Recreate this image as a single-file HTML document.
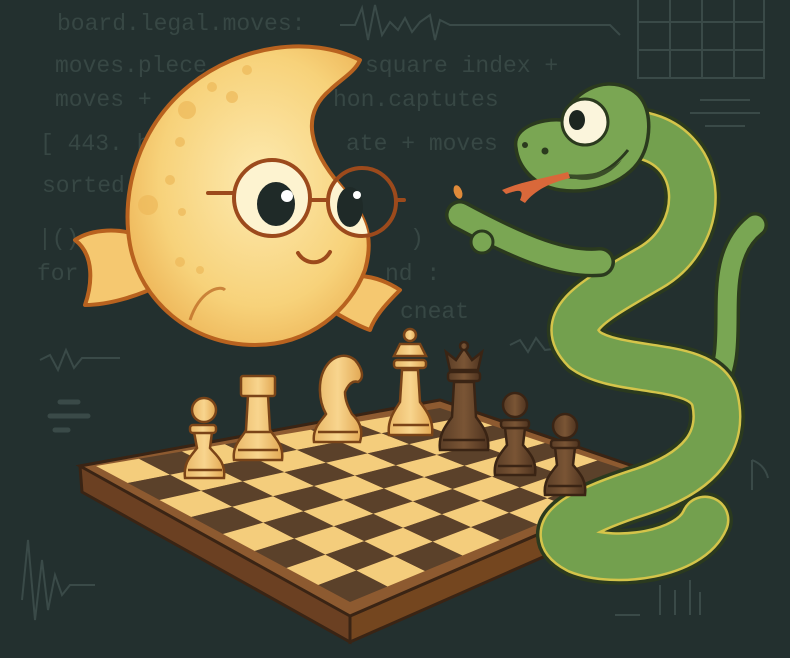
<!DOCTYPE html>
<html><head><meta charset="utf-8">
<style>
html,body{margin:0;padding:0;background:#23302f;}
svg{display:block}
.code{font-family:"Liberation Mono",monospace;font-size:23px;fill:#374744;}
</style></head>
<body>
<svg id="s" width="790" height="658" viewBox="0 0 790 658" xmlns="http://www.w3.org/2000/svg">
<defs>
<radialGradient id="fishg" cx="0.55" cy="0.45" r="0.6">
<stop offset="0" stop-color="#fdeab0"/><stop offset="0.7" stop-color="#f7d27a"/><stop offset="1" stop-color="#eeb75a"/>
</radialGradient>
<linearGradient id="lp" x1="0" x2="1"><stop offset="0" stop-color="#e9b766"/><stop offset="0.5" stop-color="#f8d58e"/><stop offset="1" stop-color="#e2a853"/></linearGradient>
<linearGradient id="dp" x1="0" x2="1"><stop offset="0" stop-color="#5a3d26"/><stop offset="0.5" stop-color="#7a5535"/><stop offset="1" stop-color="#4e331f"/></linearGradient>
<clipPath id="fc"><path d="M360 60 C310 35 240 45 190 85 C140 125 120 190 130 245 C140 300 190 345 255 345 C310 345 350 310 365 270 C375 235 365 215 340 185 C310 150 300 115 330 90 C340 80 355 72 360 60 Z"/></clipPath>
</defs>
<rect width="790" height="658" fill="#23302f"/>
<g class="code">
<text x="57" y="30">board.legal.moves:</text>
<text x="55" y="72">moves.plece</text>
<text x="365" y="72">square index +</text>
<text x="55" y="106">moves +</text>
<text x="333" y="106">hon.captutes</text>
<text x="40" y="150">[ 443. b</text>
<text x="346" y="150">ate + moves</text>
<text x="42" y="192">sorted</text>
<text x="38" y="245">|()</text>
<text x="410" y="245">)</text>
<text x="37" y="280">for</text>
<text x="385" y="280">nd :</text>
<text x="400" y="318">cneat</text>
</g>
<g stroke="#3a4a48" stroke-width="2" fill="none">
<path d="M340 25 L355 25 L362 8 L368 40 L375 5 L382 35 L390 22 L398 30 L405 18 L412 32 L420 22 L430 15 L435 40 L440 20 L450 25 L610 25 L620 35"/>
<path d="M638 0 V78 H764 V0 M638 22 H764 M638 50 H764 M670 0 V78 M702 0 V78 M734 0 V78"/>
<path d="M22 600 L28 540 L35 620 L42 560 L48 610 L55 575 L62 595 L70 585 L95 585"/>
<path d="M40 360 L50 355 L58 370 L66 350 L74 368 L82 358 L120 358"/>
<path d="M510 345 L520 340 L528 352 L536 338 L545 350 L560 348"/>
<path d="M700 100 H750 M690 113 H760 M705 126 H745"/>
<path d="M660 585 V615 M675 590 V615 M690 580 V615 M700 592 V615 M615 615 H640"/>
<path d="M752 460 V490 M752 460 Q765 465 768 478"/>
</g>
<g stroke="#3a4a48" stroke-width="5" stroke-linecap="round">
<path d="M60 402 H78 M50 416 H88 M55 430 H68"/>
</g>
<g id="board">
<polygon points="80,466 440,400 668,478 350,616 350,642 82,492" fill="#6b4022" stroke="#3a2414" stroke-width="3"/>
<polygon points="350,616 668,478 668,502 350,642" fill="#74461f" stroke="#3a2414" stroke-width="3"/>
<polygon points="80,466 440,400 668,478 350,616" fill="#8d5a30" stroke="#3a2414" stroke-width="3"/>
<g id="sq"></g>
</g>
<!-- fish -->
<g stroke="#b8621f" stroke-width="4" stroke-linejoin="round">
<path d="M150 240 C120 225 90 230 75 240 C95 255 92 285 85 305 C110 305 140 295 160 285 Z" fill="#f5c870"/>
<path d="M335 280 C360 270 385 280 400 290 C390 300 375 315 370 330 C355 325 340 315 330 310 Z" fill="#f5c870"/>
<path d="M360 60 C310 35 240 45 190 85 C140 125 120 190 130 245 C140 300 190 345 255 345 C310 345 350 310 365 270 C375 235 365 215 340 185 C310 150 300 115 330 90 C340 80 355 72 360 60 Z" fill="url(#fishg)"/>
<path d="M190 320 C200 290 220 285 225 290" fill="none" stroke-width="3" opacity="0.7"/>
</g>
<g fill="#eeb95a" opacity="0.7">
<circle cx="247" cy="70" r="5"/><circle cx="212" cy="87" r="5"/><circle cx="232" cy="97" r="6"/><circle cx="187" cy="110" r="9"/><circle cx="180" cy="142" r="5"/><circle cx="170" cy="180" r="5"/><circle cx="148" cy="205" r="10"/><circle cx="182" cy="212" r="4"/><circle cx="180" cy="262" r="5"/><circle cx="200" cy="270" r="4"/>
</g>
<circle cx="272" cy="198" r="38" fill="#fdf3d0"/>
<circle cx="362" cy="202" r="34" fill="#fdf3d0" clip-path="url(#fc)"/>
<g stroke="#9c4a1c" stroke-width="4" fill="none" stroke-linecap="round">
<circle cx="272" cy="198" r="38"/>
<circle cx="362" cy="202" r="34"/>
<path d="M208 193 H234 M310 200 H328 M396 200 H404"/>
</g>
<ellipse cx="276" cy="204" rx="19" ry="22" fill="#1f2a28"/>
<circle cx="287" cy="196" r="6" fill="#fff"/>
<ellipse cx="350" cy="207" rx="13" ry="20" fill="#1f2a28"/>
<circle cx="357" cy="195" r="4" fill="#fff"/>
<path d="M298 253 C305 265 322 266 330 252" fill="none" stroke="#9c4a1c" stroke-width="4" stroke-linecap="round"/>
<ellipse cx="458" cy="192" rx="4" ry="7" fill="#e08a3a" transform="rotate(-20 458 192)"/>
<!-- snake -->
<g fill="none" stroke-linecap="round" stroke-linejoin="round">
<path id="body" d="M640 135 C708 148 708 235 650 268 C595 300 555 320 585 350 C620 375 705 360 715 400 C724 440 702 472 640 492 C585 510 540 530 578 550 C615 565 690 555 705 520"/>
<path d="M712 390 C745 350 705 265 755 225" stroke="#2b3a1e" stroke-width="26"/>
<path d="M712 390 C745 350 705 265 755 225" stroke="#79a653" stroke-width="19"/>
<use href="#body" stroke="#2b3a1e" stroke-width="56"/>
<use href="#body" stroke="#d4c44a" stroke-width="49"/>
<use href="#body" stroke="#73a04e" stroke-width="44"/>
<path d="M600 262 C565 265 525 250 460 215" stroke="#2b3a1e" stroke-width="30"/>
<path d="M600 262 C565 265 525 250 460 215" stroke="#7aa653" stroke-width="23"/>
</g>
<circle cx="482" cy="242" r="11" fill="#7aa653" stroke="#2b3a1e" stroke-width="3"/>
<path d="M516 148 C512 128 540 118 562 120 C572 92 602 76 628 88 C655 100 650 138 644 152 C632 182 592 195 560 190 C533 186 518 166 516 148 Z" fill="#7aa653" stroke="#2b3a1e" stroke-width="3.5"/>
<path d="M562 176 C592 182 612 170 628 150" fill="none" stroke="#2b3a1e" stroke-width="3"/>
<path d="M565 174 C582 186 607 179 622 160 C607 173 587 176 565 174Z" fill="#3a4d28"/>
<path d="M568 172 C545 178 520 182 502 190 L506 194 C518 190 525 188 520 200 L525 203 C535 190 550 183 570 178 Z" fill="#d9683a"/>
<circle cx="585" cy="122" r="23" fill="#fbf5dc" stroke="#2b3a1e" stroke-width="3"/>
<ellipse cx="577" cy="120" rx="8" ry="10" fill="#1d2620"/>
<circle cx="525" cy="145" r="3" fill="#2b3a1e"/><circle cx="545" cy="151" r="3.5" fill="#2b3a1e"/>
<!-- pieces -->
<g stroke="#7a4418" stroke-width="2.5" fill="url(#lp)">
<path d="M185 478 C183 462 192 455 197 448 L194 432 L212 432 L210 448 C216 455 226 462 224 478 Z"/>
<rect x="190" y="425" width="26" height="8" rx="3"/>
<circle cx="204" cy="410" r="12"/>
<path d="M188 470 H222" fill="none"/>
<path d="M234 460 C232 445 242 438 246 430 L248 395 L268 395 L270 430 C275 438 284 445 282 460 Z"/>
<rect x="241" y="376" width="34" height="20" rx="2"/>
<path d="M238 450 H278 M245 432 H271" fill="none"/>
<path d="M314 442 C312 428 322 420 326 414 C318 400 318 380 325 368 C332 356 345 352 355 360 C362 368 365 378 358 382 C352 380 348 385 345 392 C345 402 350 410 352 414 C358 420 364 428 360 442 Z"/>
<path d="M318 432 H358" fill="none"/>
<path d="M389 435 C387 420 395 410 400 402 L402 370 L418 370 L420 402 C426 410 434 420 432 435 Z"/>
<path d="M394 356 H426 L420 344 H400 Z"/>
<rect x="394" y="360" width="32" height="8" rx="3"/>
<circle cx="410" cy="335" r="6"/>
<path d="M393 425 H429" fill="none"/>
</g>
<g stroke="#3a2414" stroke-width="2.5" fill="url(#dp)">
<path d="M440 450 C438 435 446 425 452 417 L454 382 L474 382 L476 417 C482 425 490 435 488 450 Z"/>
<rect x="448" y="372" width="32" height="9" rx="3"/>
<path d="M450 370 L446 352 L456 360 L464 348 L472 360 L482 352 L478 370 Z"/>
<circle cx="464" cy="346" r="4"/>
<path d="M443 440 H485" fill="none"/>
<path d="M495 475 C493 460 502 452 507 445 L505 428 L525 428 L523 445 C529 452 537 460 535 475 Z"/>
<rect x="501" y="420" width="28" height="8" rx="3"/>
<circle cx="515" cy="405" r="12"/>
<path d="M498 466 H532" fill="none"/>
<path d="M545 495 C543 480 552 472 557 465 L555 447 L575 447 L573 465 C579 472 587 480 585 495 Z"/>
<rect x="551" y="440" width="28" height="8" rx="3"/>
<circle cx="565" cy="426" r="12"/>
<path d="M548 486 H582" fill="none"/>
</g>
</svg>
<script>
(function(){
var A=[96,466],B=[440,408],C=[650,478],D=[350,602];
function P(u,v){
 var x=(1-u)*(1-v)*A[0]+u*(1-v)*B[0]+u*v*C[0]+(1-u)*v*D[0];
 var y=(1-u)*(1-v)*A[1]+u*(1-v)*B[1]+u*v*C[1]+(1-u)*v*D[1];
 return x.toFixed(1)+','+y.toFixed(1);
}
var g=document.getElementById('sq'),s='';
for(var i=0;i<8;i++)for(var j=0;j<8;j++){
 var u0=i/8,u1=(i+1)/8,v0=j/8,v1=(j+1)/8;
 var c=((i+j)%2==0)?'#f4cd7c':'#5b412a';
 s+='<polygon points="'+P(u0,v0)+' '+P(u1,v0)+' '+P(u1,v1)+' '+P(u0,v1)+'" fill="'+c+'"/>';
}
g.innerHTML=s;
})();
</script>
</body></html>
